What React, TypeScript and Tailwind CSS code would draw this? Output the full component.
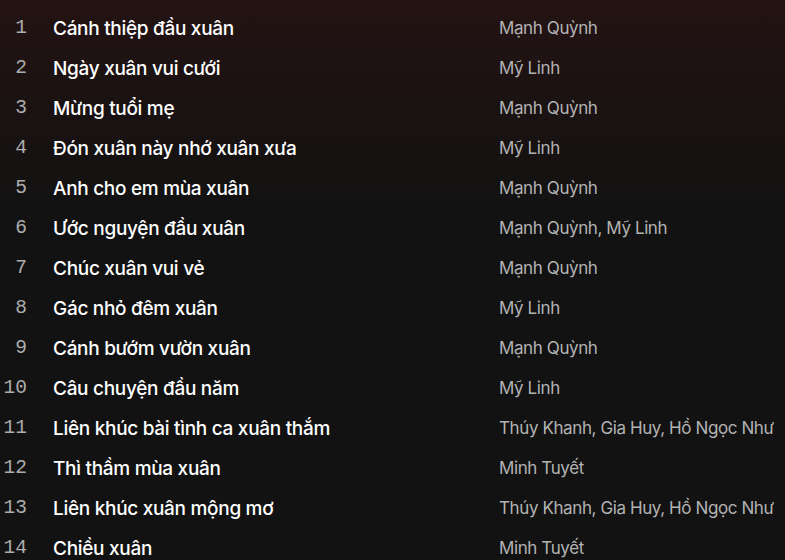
import React from "react";

const songs: [string, string][] = [
  ["Cánh thiệp đầu xuân", "Mạnh Quỳnh"],
  ["Ngày xuân vui cưới", "Mỹ Linh"],
  ["Mừng tuổi mẹ", "Mạnh Quỳnh"],
  ["Đón xuân này nhớ xuân xưa", "Mỹ Linh"],
  ["Anh cho em mùa xuân", "Mạnh Quỳnh"],
  ["Ước nguyện đầu xuân", "Mạnh Quỳnh, Mỹ Linh"],
  ["Chúc xuân vui vẻ", "Mạnh Quỳnh"],
  ["Gác nhỏ đêm xuân", "Mỹ Linh"],
  ["Cánh bướm vườn xuân", "Mạnh Quỳnh"],
  ["Câu chuyện đầu năm", "Mỹ Linh"],
  ["Liên khúc bài tình ca xuân thắm", "Thúy Khanh, Gia Huy, Hồ Ngọc Như"],
  ["Thì thầm mùa xuân", "Minh Tuyết"],
  ["Liên khúc xuân mộng mơ", "Thúy Khanh, Gia Huy, Hồ Ngọc Như"],
  ["Chiều xuân", "Minh Tuyết"],
];

export default function App() {
  return (
    <div className="w-[785px] h-[560px] overflow-hidden bg-[linear-gradient(180deg,#241313_0px,#1a1212_110px,#121212_220px,#121212_560px)] pt-[8px]">
      {songs.map(([title, artist], i) => (
        <div key={i} className="flex items-center h-[40px]">
          <div className="w-[27px] pt-[1px] text-right text-[19.5px] text-[#adadad] font-['Liberation_Mono',monospace] leading-none">
            {i + 1}
          </div>
          <div className="ml-[26px] w-[446px] pt-[2px] text-[19px] font-medium text-white font-['Inter',sans-serif] tracking-[-0.3px] whitespace-nowrap">
            {title}
          </div>
          <div className="pt-[2px] text-[17px] text-[#b3b3b3] font-['Inter',sans-serif] tracking-[-0.4px] whitespace-nowrap">
            {artist}
          </div>
        </div>
      ))}
    </div>
  );
}
